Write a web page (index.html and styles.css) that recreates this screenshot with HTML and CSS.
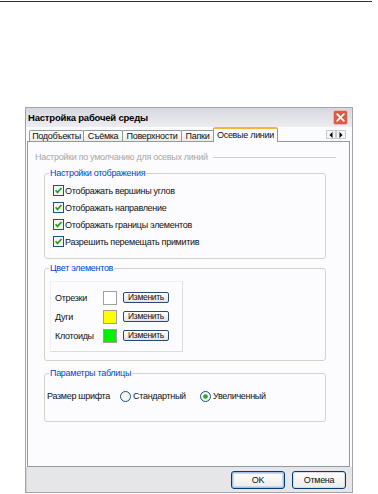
FILE: index.html
```html
<!DOCTYPE html>
<html lang="ru">
<head>
<meta charset="utf-8">
<title>Настройка рабочей среды</title>
<link rel="stylesheet" href="styles.css">
</head>
<body>
<div class="topline"></div>
<div class="dialog">
  <div class="titlebar">
    <span class="title">Настройка рабочей среды</span>
    <span class="close"><svg width="15" height="15" viewBox="0 0 15 15"><rect x="0.5" y="0.5" width="14" height="14" rx="2" fill="#dd5a47" stroke="#f2b4a8"/><path d="M4.2 4.2 L10.8 10.8 M10.8 4.2 L4.2 10.8" stroke="#fff" stroke-width="1.8" stroke-linecap="round"/></svg></span>
  </div>
  <div class="tabs">
    <span class="tab t1">Подобъекты</span>
    <span class="tab t2">Съёмка</span>
    <span class="tab t3">Поверхности</span>
    <span class="tab t4">Папки</span>
    <span class="tab t5 active">Осевые линии</span>
    <span class="scroll">
      <span class="sbtn"><svg width="4" height="6" viewBox="0 0 4 6"><path d="M3.5 0 L0.5 3 L3.5 6 Z" fill="#000"/></svg></span>
      <span class="sbtn"><svg width="4" height="6" viewBox="0 0 4 6"><path d="M0.5 0 L3.5 3 L0.5 6 Z" fill="#000"/></svg></span>
    </span>
  </div>
  <div class="panel">
    <div class="caption"><span>Настройки по умолчанию для осевых линий</span><span class="rule"></span></div>

    <fieldset class="group g1">
      <legend>Настройки отображения</legend>
      <div class="check"><svg width="11" height="11" viewBox="0 0 11 11"><rect x="0.5" y="0.5" width="10" height="10" fill="#f5f5f1" stroke="#1c5180"/><path d="M2.6 5.2 L4.5 7.4 L8.5 3" stroke="#21a121" stroke-width="1.7" fill="none"/></svg>Отображать вершины углов</div>
      <div class="check"><svg width="11" height="11" viewBox="0 0 11 11"><rect x="0.5" y="0.5" width="10" height="10" fill="#f5f5f1" stroke="#1c5180"/><path d="M2.6 5.2 L4.5 7.4 L8.5 3" stroke="#21a121" stroke-width="1.7" fill="none"/></svg>Отображать направление</div>
      <div class="check"><svg width="11" height="11" viewBox="0 0 11 11"><rect x="0.5" y="0.5" width="10" height="10" fill="#f5f5f1" stroke="#1c5180"/><path d="M2.6 5.2 L4.5 7.4 L8.5 3" stroke="#21a121" stroke-width="1.7" fill="none"/></svg>Отображать границы элементов</div>
      <div class="check"><svg width="11" height="11" viewBox="0 0 11 11"><rect x="0.5" y="0.5" width="10" height="10" fill="#f5f5f1" stroke="#1c5180"/><path d="M2.6 5.2 L4.5 7.4 L8.5 3" stroke="#21a121" stroke-width="1.7" fill="none"/></svg>Разрешить перемещать примитив</div>
    </fieldset>

    <fieldset class="group g2">
      <legend>Цвет элементов</legend>
      <div class="colors">
        <div class="crow"><span class="cname">Отрезки</span><span class="swatch white"></span><span class="sbutton">Изменить</span></div>
        <div class="crow"><span class="cname">Дуги</span><span class="swatch yellow"></span><span class="sbutton">Изменить</span></div>
        <div class="crow"><span class="cname">Клотоиды</span><span class="swatch green"></span><span class="sbutton">Изменить</span></div>
      </div>
    </fieldset>

    <fieldset class="group g3">
      <legend>Параметры таблицы</legend>
      <div class="frow">
        <span class="flabel">Размер шрифта</span>
        <span class="radio first"><svg width="11" height="11" viewBox="0 0 11 11"><circle cx="5.5" cy="5.5" r="5" fill="#f6f6f2" stroke="#1c5180"/></svg>Стандартный</span>
        <span class="radio"><svg width="11" height="11" viewBox="0 0 11 11"><circle cx="5.5" cy="5.5" r="5" fill="#f6f6f2" stroke="#1c5180"/><circle cx="5.5" cy="5.5" r="2.3" fill="#2ea52e"/></svg>Увеличенный</span>
      </div>
    </fieldset>
  </div>
  <div class="footer">
    <span class="btn default">OK</span>
    <span class="btn">Отмена</span>
  </div>
</div>
</body>
</html>
```
FILE: styles.css
```css
html, body {
  margin: 0;
  padding: 0;
  background: #fff;
}
body {
  font-family: "Liberation Sans", Arial, sans-serif;
  font-size: 9px;
  letter-spacing: -0.3px;
  color: #111;
}
.topline {
  margin-top: 1px;
  width: 372px;
  height: 1px;
  background: #333;
}
.dialog {
  margin: 105px 0 0 25px;
  width: 328px;
  height: 386px;
  box-sizing: border-box;
  border: 1px solid #a3a3ab;
  display: flex;
  flex-direction: column;
  background: #fcfcfe;
}
.titlebar {
  height: 19px;
  flex: none;
  display: flex;
  align-items: center;
  justify-content: space-between;
  padding: 0 4px 0 2px;
  background: linear-gradient(#d7d7e0, #ececf1);
}
.title {
  font-size: 9.5px;
  font-weight: bold;
  letter-spacing: -0.2px;
  color: #000;
}
.close {
  display: flex;
  width: 15px;
  height: 15px;
}
.tabs {
  height: 14px;
  flex: none;
  display: flex;
  align-items: flex-end;
  padding-left: 3px;
  background: #fcfcfe;
  position: relative;
  z-index: 1;
}
.tab {
  height: 11px;
  line-height: 11px;
  box-sizing: border-box;
  border: 1px solid #919b9c;
  border-bottom: none;
  border-radius: 2px 2px 0 0;
  margin-right: -1px;
  background: linear-gradient(#ffffff, #ecebe6);
  white-space: nowrap;
  text-align: center;
}
.t1 { width: 55px; }
.t2 { width: 40px; }
.t3 { width: 60px; }
.t4 { width: 33px; }
.t5 { width: 65px; }
.tab.active {
  height: 15px;
  line-height: 12px;
  margin-bottom: -1px;
  border-top: 2px solid #f5b53a;
  background: #fcfcfe;
  position: relative;
  z-index: 2;
}
.scroll {
  margin-left: auto;
  margin-right: 6px;
  margin-bottom: 2px;
  display: flex;
}
.sbtn {
  width: 10px;
  height: 9px;
  box-sizing: border-box;
  border: 1px solid #c9cdd2;
  background: #f4f4f4;
  display: flex;
  align-items: center;
  justify-content: center;
}
.panel {
  flex: none;
  height: 326px;
  box-sizing: border-box;
  margin: 0 2px 0 1px;
  border: 1px solid #919b9c;
  background: #fcfcfe;
  padding: 9px 23px 0 16px;
}
.caption {
  height: 12px;
  display: flex;
  align-items: center;
  margin: 0 -10px 4px -9px;
  color: #a8a8a8;
  white-space: nowrap;
}
.rule {
  flex: 1;
  margin-left: 5px;
  border-top: 1px solid #cfcfcf;
}
.group {
  margin: 0;
  padding: 3px 0 8px 4px;
  border: 1px solid #d3d3cc;
  border-radius: 3px;
  min-width: 0;
}
.group legend {
  padding: 0 1px;
  line-height: 12px;
  color: #0046d5;
}
.check {
  height: 17px;
  display: flex;
  align-items: center;
  margin-left: 4px;
  white-space: nowrap;
}
.check svg {
  margin-right: 1px;
  flex: none;
}
.g2 {
  margin-top: 3px;
  padding-top: 7px;
}
.colors {
  width: 133px;
  box-sizing: border-box;
  margin-left: 1px;
  border: 1px solid #dcdcd8;
  border-top-color: #f0f0ee;
  border-left-color: #f0f0ee;
  padding: 6px 0 6px 4px;
}
.crow {
  height: 19px;
  display: flex;
  align-items: center;
}
.cname {
  width: 48px;
}
.swatch {
  width: 14px;
  height: 14px;
  box-sizing: border-box;
  border: 1px solid #a0a0a0;
}
.swatch.white { background: #ffffff; }
.swatch.yellow { background: #ffff00; }
.swatch.green { background: #00f000; }
.sbutton {
  margin-left: 6px;
  width: 46px;
  height: 11px;
  box-sizing: border-box;
  border: 1px solid #2b4a73;
  border-radius: 2px;
  background: linear-gradient(#ffffff, #dfe3ec);
  font-size: 8.5px;
  line-height: 9px;
  text-align: center;
}
.g3 {
  margin-top: 6px;
  padding-top: 9px;
  padding-bottom: 17px;
}
.frow {
  height: 16px;
  display: flex;
  align-items: center;
  margin-left: -2px;
  white-space: nowrap;
}
.flabel {
  width: 73px;
}
.radio {
  display: flex;
  align-items: center;
}
.radio svg {
  margin-right: 2px;
}
.radio.first {
  width: 80px;
}
.footer {
  flex: 1;
  display: flex;
  justify-content: flex-end;
  align-items: flex-start;
  gap: 7px;
  padding: 4px 6px 0 0;
  background: #e6e6e8;
  border-left: 1px solid #d0d0d4;
}
.btn {
  width: 54px;
  height: 18px;
  box-sizing: border-box;
  border: 1px solid #003c74;
  border-radius: 3px;
  background: linear-gradient(#ffffff, #ecebe6);
  box-shadow: inset 0 0 0 1px #d6dbe6;
  display: flex;
  align-items: center;
  justify-content: center;
}
.btn.default {
  box-shadow: inset 0 0 0 1px #a8c0e8, inset 0 0 0 2px #cad9f2;
}
```
